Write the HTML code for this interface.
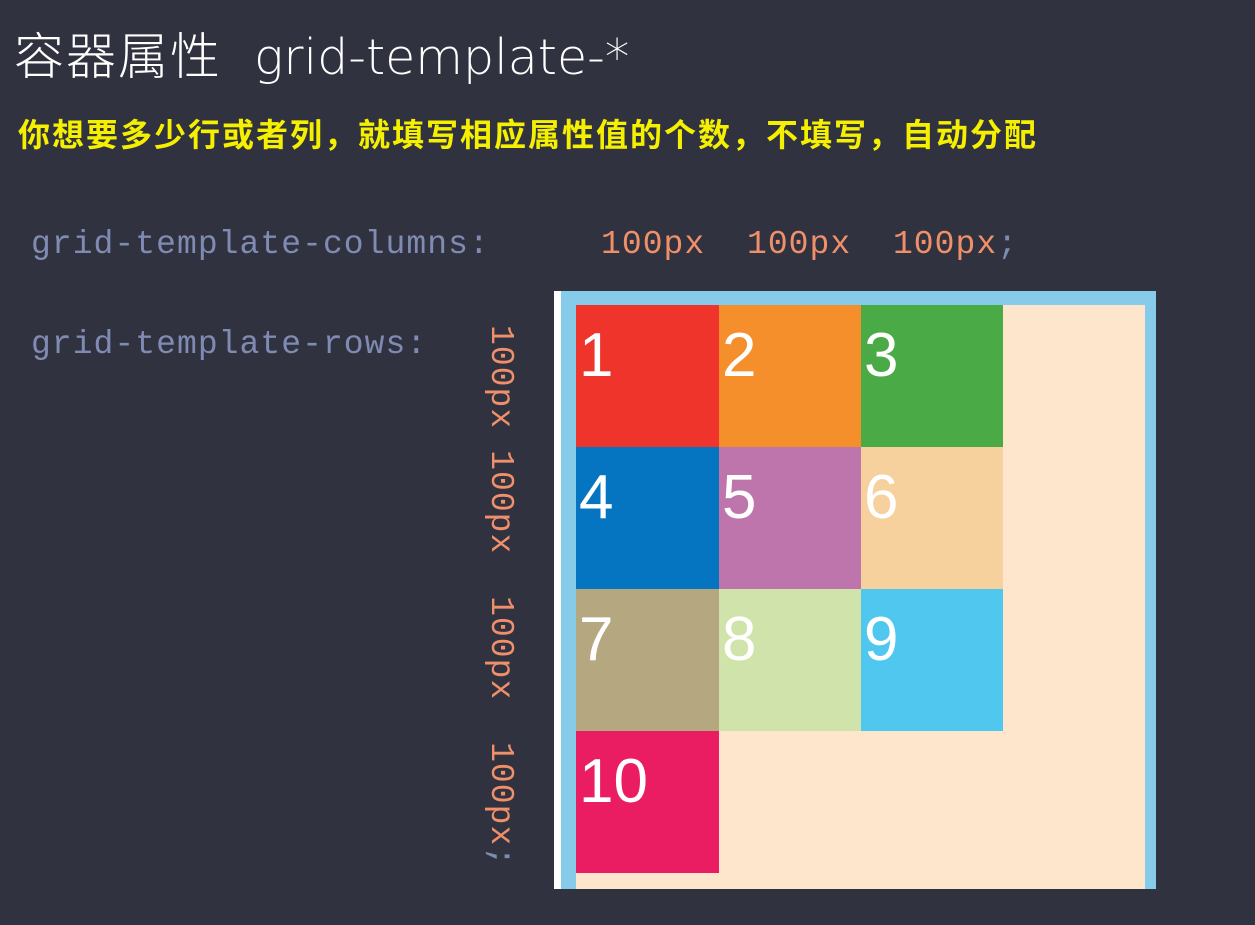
<!DOCTYPE html>
<html><head><meta charset="utf-8"><style>
body{margin:0;width:1255px;height:925px;background:#31323f;overflow:hidden;position:relative;font-family:"Liberation Sans","Noto Sans CJK SC",sans-serif}
.t{position:absolute;left:14px;top:16px;color:#fff;font-size:50px;white-space:nowrap;line-height:74px;font-family:"Noto Sans CJK SC",sans-serif;font-weight:300;letter-spacing:2px}
.t span{font-family:"DejaVu Sans",sans-serif;font-weight:200;margin-left:32px;font-size:49px;letter-spacing:0}
.y{position:absolute;left:18px;top:112px;color:#f4f000;font-size:32px;font-weight:bold;letter-spacing:2px;white-space:nowrap;line-height:42px;font-family:"Noto Sans CJK SC",sans-serif}
.c{position:absolute;font-family:"Liberation Mono","DejaVu Sans Mono",monospace;font-size:33px;letter-spacing:1.05px;white-space:pre;color:#7f8bb3;line-height:40px}
.o{color:#f0906a}
.v{position:absolute;left:500px;top:325px;transform-origin:0 0;transform:rotate(90deg) translateY(-20px)}
.box{position:absolute;left:554px;top:291px;width:602px;height:598px;background:#87cbea}
.w{position:absolute;left:554px;top:291px;width:7px;height:598px;background:#fff}
.in{position:absolute;left:576px;top:305px;width:569px;height:584px;background:#fee6cd}
.cell{position:absolute;width:143px;height:142px;color:#fff;font-size:62px;line-height:102px;padding-left:3px;box-sizing:border-box;font-family:"Liberation Sans",sans-serif}
</style></head><body>
<div class="t">容器属性<span>grid-template-*</span></div>
<div class="y">你想要多少行或者列，就填写相应属性值的个数，不填写，自动分配</div>
<div class="c" style="left:31px;top:225px">grid-template-columns:</div>
<div class="c" style="left:601px;top:225px"><span class="o">100px  100px  100px</span>;</div>
<div class="c" style="left:31px;top:325px">grid-template-rows:</div>
<div class="c v"><span class="o">100px 100px  100px  100px</span>;</div>
<div class="box"></div><div class="w"></div><div class="in"></div>
<div class="cell" style="left:576px;top:305px;background:#ef342c">1</div>
<div class="cell" style="left:719px;top:305px;background:#f58f2b">2</div>
<div class="cell" style="left:861px;top:305px;width:142px;background:#4aaa46">3</div>
<div class="cell" style="left:576px;top:447px;background:#0675c1">4</div>
<div class="cell" style="left:719px;top:447px;background:#bd75ab">5</div>
<div class="cell" style="left:861px;top:447px;width:142px;background:#f6d19d">6</div>
<div class="cell" style="left:576px;top:589px;background:#b5a780">7</div>
<div class="cell" style="left:719px;top:589px;background:#cfe3aa">8</div>
<div class="cell" style="left:861px;top:589px;width:142px;background:#4fc7ee">9</div>
<div class="cell" style="left:576px;top:731px;background:#eb1d62">10</div>
</body></html>
